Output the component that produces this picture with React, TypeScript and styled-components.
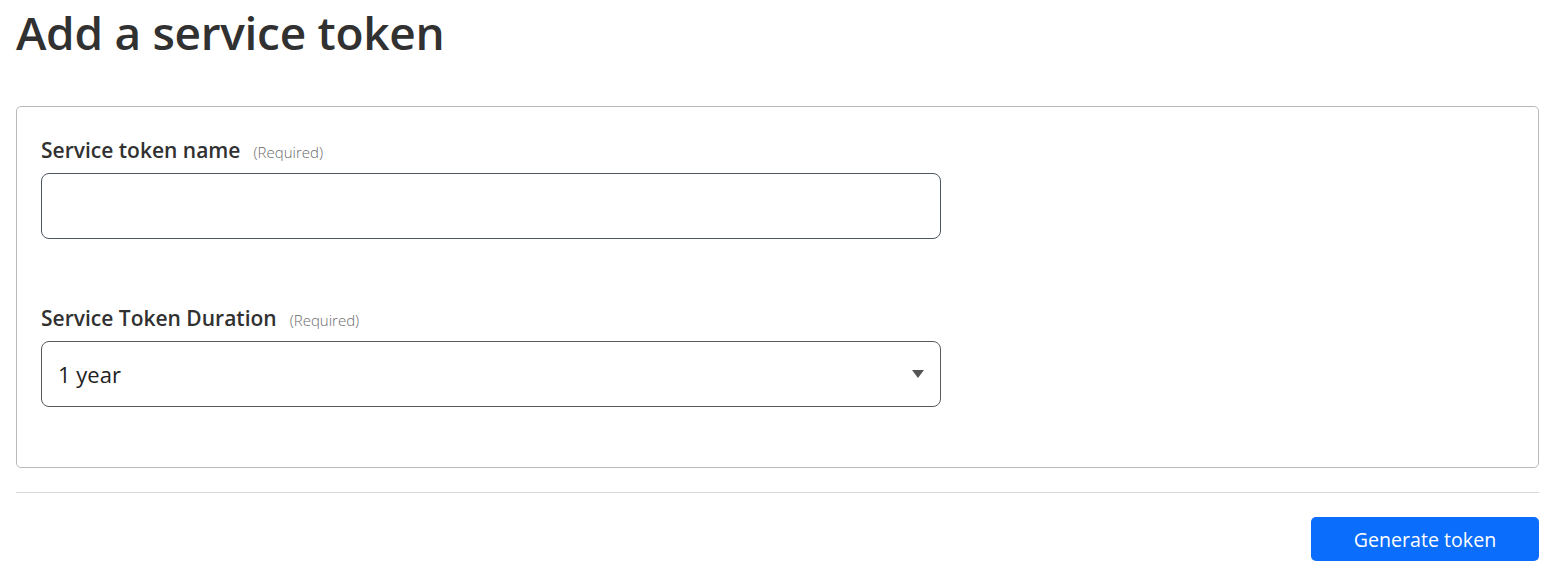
import React from "react";
import styled, { createGlobalStyle } from "styled-components";

const GlobalStyle = createGlobalStyle`
  html, body {
    margin: 0;
    padding: 0;
    background: #ffffff;
  }
  body {
    font-family: "Open Sans", "Noto Sans", "Liberation Sans", sans-serif;
    color: #313131;
  }
  * { box-sizing: border-box; }
`;

const Page = styled.div`
  padding: 0 15px 0 16px;
  width: 1554px;
`;

const Title = styled.h1`
  margin: 0;
  padding-top: 3px;
  height: 60px;
  font-size: 46px;
  line-height: 58px;
  font-weight: 600;
  letter-spacing: -0.3px;
  color: #313131;
`;

const Card = styled.form`
  margin-top: 46px;
  border: 1px solid #b9b9b9;
  border-radius: 5px;
  padding: 28px 24px 60px 24px;
  display: flex;
  flex-direction: column;
  gap: 64px;
`;

const Field = styled.div`
  display: flex;
  flex-direction: column;
  gap: 10px;
  width: 900px;
`;

const LabelRow = styled.label`
  display: flex;
  align-items: baseline;
  gap: 13px;
  height: 28px;
  line-height: 28px;
  padding-top: 1px;
`;

const LabelText = styled.span`
  font-size: 21px;
  font-weight: 600;
  color: #313131;
`;

const Hint = styled.span`
  font-size: 15px;
  font-weight: 300;
  color: #6b6b6b;
`;

const TextInput = styled.input`
  height: 66px;
  width: 100%;
  border: 1px solid #4d5560;
  border-radius: 8px;
  padding: 0 16px;
  font-family: inherit;
  font-size: 20px;
  color: #313131;
  background: #fff;
  outline: none;
`;

const SelectBox = styled.div`
  height: 66px;
  width: 100%;
  border: 1px solid #5a5a5a;
  border-radius: 8px;
  padding: 0 16px;
  display: flex;
  align-items: center;
  justify-content: space-between;
  font-size: 22px;
  color: #222;
  background: #fff;
`;

const Caret = styled.span`
  width: 0;
  height: 0;
  border-left: 6.5px solid transparent;
  border-right: 6.5px solid transparent;
  border-top: 8px solid #555;
`;

const Divider = styled.hr`
  margin: 24px 0 24px 0;
  border: none;
  border-top: 1px solid #d9d9d9;
`;

const Footer = styled.div`
  display: flex;
  justify-content: flex-end;
`;

const PrimaryButton = styled.button`
  height: 44px;
  width: 228px;
  border: none;
  border-radius: 5px;
  background: #0a6dfb;
  color: #fff;
  font-family: inherit;
  font-size: 19.6px;
  font-weight: 400;
  cursor: pointer;
`;

export default function App() {
  return (
    <>
      <GlobalStyle />
      <Page>
        <Title>Add a service token</Title>
        <Card onSubmit={(e) => e.preventDefault()}>
          <Field>
            <LabelRow htmlFor="token-name">
              <LabelText>Service token name</LabelText>
              <Hint>(Required)</Hint>
            </LabelRow>
            <TextInput id="token-name" type="text" />
          </Field>
          <Field>
            <LabelRow>
              <LabelText>Service Token Duration</LabelText>
              <Hint>(Required)</Hint>
            </LabelRow>
            <SelectBox>
              <span>1 year</span>
              <Caret />
            </SelectBox>
          </Field>
        </Card>
        <Divider />
        <Footer>
          <PrimaryButton type="button">Generate token</PrimaryButton>
        </Footer>
      </Page>
    </>
  );
}
